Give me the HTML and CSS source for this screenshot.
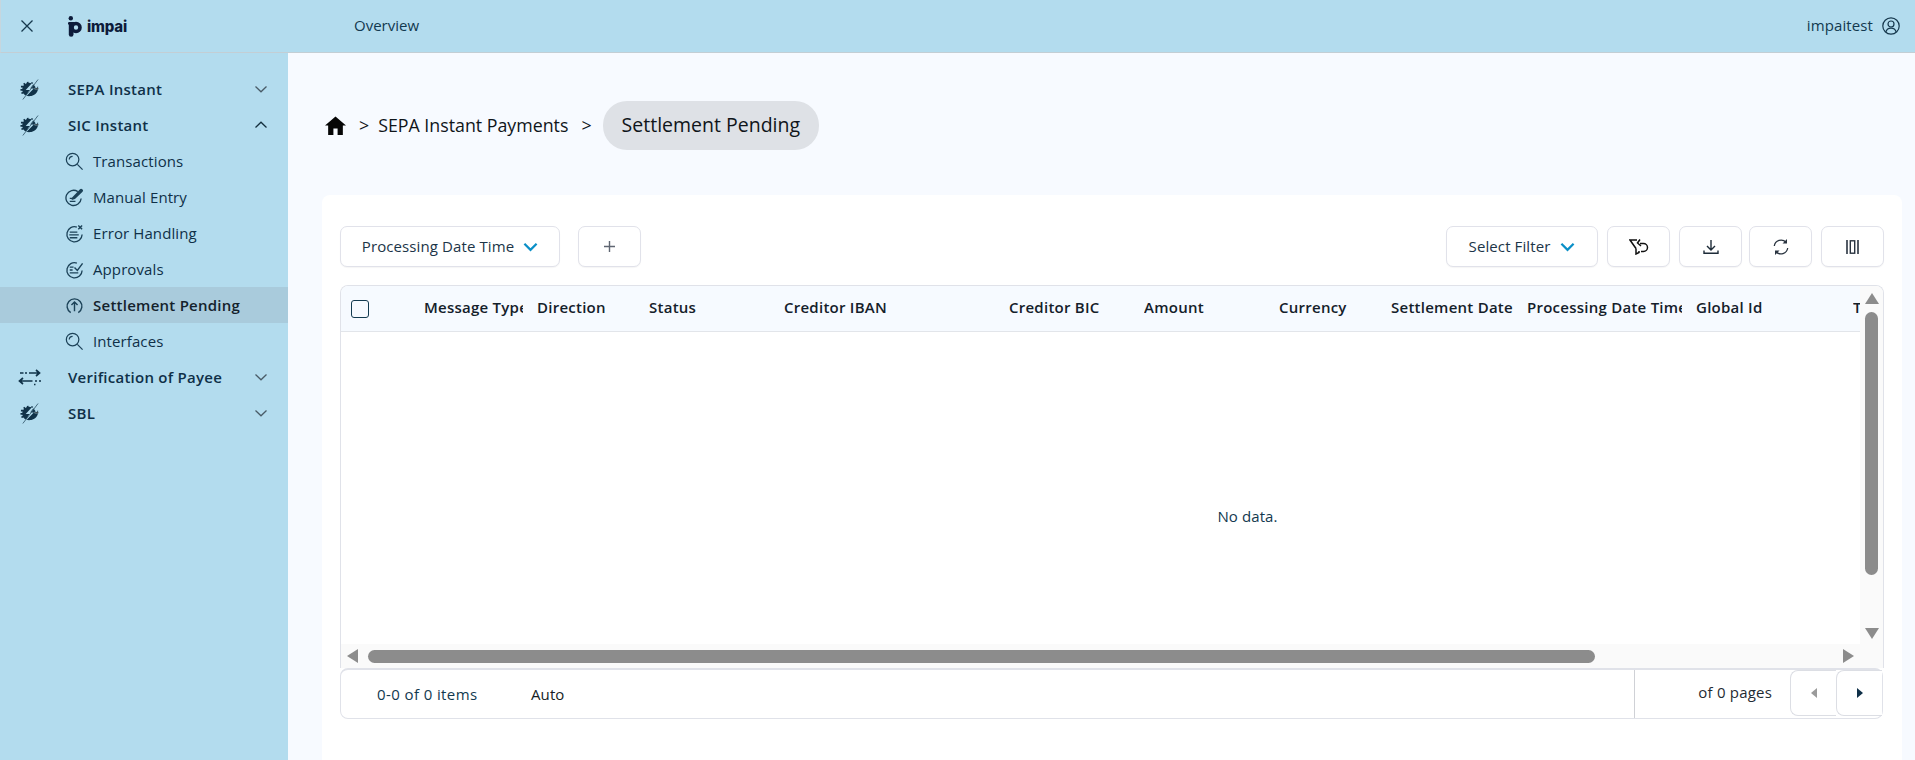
FILE: index.html
```html
<!DOCTYPE html>
<html lang="en">
<head>
  <meta charset="UTF-8">
  <meta name="viewport" content="width=device-width, initial-scale=1.0">
  <title>Settlement Pending</title>
  <link rel="stylesheet" href="styles.css">
</head>

<body>

  <!-- Shared sidebar icons -->
  <svg class="icon-defs" width="0" height="0">
    <symbol id="i-bolt" viewBox="0 0 20 22">
      <circle cx="9.500" cy="11" r="7.200" fill="currentColor"/>
      <path d="M1 8h3M.5 11.500h3M1.500 15l3-1M4 4.500l2 2.500M8 3l.5 3M13 3.500 12 6" stroke="currentColor" stroke-width="1.800"/>
      <path d="M19 7.500c.5 4.500-1.500 9-7 10-1.500.3-3 0-4-.5 2.500-.5 7-4.500 11-9.500Z" fill="currentColor"/>
      <path d="M12.500 4.500 6 11.500h4l-3 5-1 2 8.500-8.500h-3.800l3.300-4.500Z" fill="#b3dcee"/>
      <path d="M15.500 9.500h4v1.200h-4ZM3.500 21.500 18.500.5" stroke="#b3dcee" stroke-width=".5"/>
      <path d="M3 21.500 19 .5" stroke="currentColor" stroke-width=".7" fill="none"/>
    </symbol>
    <symbol id="i-search" viewBox="0 0 20 20">
      <circle cx="8" cy="8" r="6.600" fill="none" stroke="currentColor" stroke-width="1.300"/>
      <path d="m13 13 5.500 5.500M4.500 8A3.500 3.500 0 0 1 8 4.500" fill="none" stroke="currentColor" stroke-width="1.300"/>
    </symbol>
    <symbol id="i-transfer" viewBox="0 0 24 18">
      <path d="M2 5h3.500M7 5h2M11 5h10M18 2l3.500 3L18 8M23 13h-2M19 13h-2M14.500 13H2M5 10l-3.500 3L5 16" fill="none" stroke="currentColor" stroke-width="1.700"/>
      <path d="M16 16.500h1.500" stroke="currentColor" stroke-width="1.500"/>
    </symbol>
    <symbol id="i-chev" viewBox="0 0 14 8">
      <path d="M1.500 1.500 7 6.800l5.500-5.300" fill="none" stroke="currentColor" stroke-width="1.300"/>
    </symbol>
    <symbol id="i-caret" viewBox="0 0 16 10">
      <path d="M1.500 1.500 8 8l6.500-6.500" fill="none" stroke="currentColor" stroke-width="2.400"/>
    </symbol>
  </svg>

  <header class="topbar">
    <button class="close-btn">
      <svg width="14" height="14" viewBox="0 0 14 14"><path d="m1.500 1.500 11 11m0-11-11 11" stroke="#16384d" stroke-width="1.300" fill="none"/></svg>
    </button>
    <div class="logo">
      <svg width="14" height="21" viewBox="0 0 14 21">
        <circle cx="2.800" cy="2.200" r="2.200" fill="#0d1b3a"/>
        <rect x="0" y="6" width="7" height="2.800" rx="1.200" fill="#0d1b3a"/>
        <path d="M.8 8h4.700v10.500a2.350 2.350 0 0 1-4.700 0Z" fill="#0d1b3a"/>
        <circle cx="8" cy="11.500" r="4" fill="none" stroke="#0d1b3a" stroke-width="3.600"/>
      </svg>
      <span class="logo-text">impai</span>
    </div>
    <a class="top-link">Overview</a>
    <div class="user">
      <span>impaitest</span>
      <svg width="18" height="18" viewBox="0 0 18 18">
        <circle cx="9" cy="9" r="8.200" fill="none" stroke="#16384d" stroke-width="1.200"/>
        <circle cx="9" cy="7" r="3" fill="none" stroke="#16384d" stroke-width="1.200"/>
        <path d="M3.800 15c.8-2.600 2.800-3.800 5.200-3.800s4.400 1.200 5.200 3.800" fill="none" stroke="#16384d" stroke-width="1.200"/>
      </svg>
    </div>
  </header>

  <div class="layout">
    <aside class="sidebar">
      <div class="nav-item nav-group">
        <svg class="group-icon"><use href="#i-bolt"/></svg>
        <span>SEPA Instant</span>
        <svg class="chev"><use href="#i-chev"/></svg>
      </div>
      <div class="nav-item nav-group">
        <svg class="group-icon"><use href="#i-bolt"/></svg>
        <span>SIC Instant</span>
        <svg class="chev chev-up"><use href="#i-chev"/></svg>
      </div>
      <div class="nav-item nav-child">
        <svg class="child-icon"><use href="#i-search"/></svg>
        <span>Transactions</span>
      </div>
      <div class="nav-item nav-child">
        <svg class="child-icon" viewBox="0 0 20 20">
          <path d="M13.500 3.800A8 8 0 1 0 17 11" fill="none" stroke="currentColor" stroke-width="1.400"/>
          <path d="M5 14h6M5 11h3" stroke="currentColor" stroke-width="1.400"/>
          <path d="m7.500 10 8-8.500a1.800 1.800 0 0 1 3 2.500l-8 7.500-3.500 1Z" fill="currentColor"/>
        </svg>
        <span>Manual Entry</span>
      </div>
      <div class="nav-item nav-child">
        <svg class="child-icon" viewBox="0 0 20 20">
          <path d="M12.500 3.200A8 8 0 1 0 18 11" fill="none" stroke="currentColor" stroke-width="1.400"/>
          <path d="M5 8.500h8M4.500 11.500h10M5 14.500h8" stroke="currentColor" stroke-width="1.400"/>
          <path d="m14 1.500 4 4m0-4-4 4" stroke="currentColor" stroke-width="1.500"/>
        </svg>
        <span>Error Handling</span>
      </div>
      <div class="nav-item nav-child">
        <svg class="child-icon" viewBox="0 0 20 20">
          <path d="M12.500 3.200A8 8 0 1 0 18 11" fill="none" stroke="currentColor" stroke-width="1.400"/>
          <path d="M5 7.500h4M5 10.500h3M5 13.500h9" stroke="currentColor" stroke-width="1.400"/>
          <path d="m10 8 3 3 5.500-7.500" fill="none" stroke="currentColor" stroke-width="1.500"/>
        </svg>
        <span>Approvals</span>
      </div>
      <div class="nav-item nav-child nav-active">
        <svg class="child-icon" viewBox="0 0 20 20">
          <path d="M6 17.500A7.800 7.800 0 1 1 14 17.500" fill="none" stroke="currentColor" stroke-width="1.500"/>
          <path d="M10 16V6.500M6.800 9.500 10 6.300l3.200 3.200" fill="none" stroke="currentColor" stroke-width="1.500"/>
        </svg>
        <span>Settlement Pending</span>
      </div>
      <div class="nav-item nav-child">
        <svg class="child-icon"><use href="#i-search"/></svg>
        <span>Interfaces</span>
      </div>
      <div class="nav-item nav-group">
        <svg class="group-icon wide"><use href="#i-transfer"/></svg>
        <span>Verification of Payee</span>
        <svg class="chev"><use href="#i-chev"/></svg>
      </div>
      <div class="nav-item nav-group">
        <svg class="group-icon"><use href="#i-bolt"/></svg>
        <span>SBL</span>
        <svg class="chev"><use href="#i-chev"/></svg>
      </div>
    </aside>

    <main class="main">
      <div class="breadcrumb">
        <svg width="21" height="19" viewBox="0 0 20 19" preserveAspectRatio="none"><path d="M10 .5 0 9.500h3V19h5v-6.500h4V19h5V9.500h3Z" fill="#060606"/></svg>
        <span class="crumb-sep">&gt;</span>
        <span class="crumb">SEPA Instant Payments</span>
        <span class="crumb-sep">&gt;</span>
        <span class="crumb-current">Settlement Pending</span>
      </div>

      <section class="card">
        <div class="toolbar">
          <button class="btn btn-select"><span>Processing Date Time</span> <svg class="caret"><use href="#i-caret"/></svg></button>
          <button class="btn btn-icon btn-add">
            <svg width="13" height="13" viewBox="0 0 13 13"><path d="M6.500 1v11M1 6.500h11" stroke="#5f6672" stroke-width="1.400"/></svg>
          </button>
          <div class="toolbar-right">
            <button class="btn btn-filter"><span>Select Filter</span> <svg class="caret"><use href="#i-caret"/></svg></button>
            <button class="btn btn-icon">
              <svg width="20" height="17" viewBox="0 0 20 17">
                <path d="M7 10.500 1 2h7M7 10.500V16l3-1.500V13" fill="none" stroke="#111" stroke-width="1.500"/>
                <path d="M11 5.500h3.500a4 4 0 0 1 0 8H12M11 1.500 8.500 5l3.500 3" fill="none" stroke="#111" stroke-width="1.500"/>
              </svg>
            </button>
            <button class="btn btn-icon">
              <svg width="16" height="16" viewBox="0 0 16 16">
                <path d="M8 1v9.500M4 7l4 4 4-4M1 11.500v2.700h14v-2.700" fill="none" stroke="#1d2b38" stroke-width="1.400"/>
              </svg>
            </button>
            <button class="btn btn-icon btn-tight">
              <svg width="16" height="16" viewBox="0 0 16 16">
                <path d="M1.300 7A6.800 6.800 0 0 1 13 3.300M14.700 9A6.800 6.800 0 0 1 3 12.700" fill="none" stroke="#2a3440" stroke-width="1.300"/>
                <path d="M14 0v4.500H9.500ZM2 16v-4.500h4.500Z" fill="#2a3440"/>
              </svg>
            </button>
            <button class="btn btn-icon">
              <svg width="13" height="14" viewBox="0 0 13 14">
                <path d="M1 0v14M12 0v14" stroke="#2a3440" stroke-width="1.600"/>
                <rect x="4.300" y=".8" width="4.400" height="12.400" fill="none" stroke="#2a3440" stroke-width="1.400"/>
              </svg>
            </button>
          </div>
        </div>

        <div class="table">
          <div class="table-top">
            <div class="table-content">
              <div class="table-head">
                <div class="cell-check"><span class="checkbox"></span></div>
                <div class="th w-113"><span>Message Type</span></div>
                <div class="th w-112"><span>Direction</span></div>
                <div class="th w-135"><span>Status</span></div>
                <div class="th w-225"><span>Creditor IBAN</span></div>
                <div class="th w-135"><span>Creditor BIC</span></div>
                <div class="th w-135"><span>Amount</span></div>
                <div class="th w-112"><span>Currency</span></div>
                <div class="th w-136"><span>Settlement Date</span></div>
                <div class="th w-169"><span>Processing Date Time</span></div>
                <div class="th w-157"><span>Global Id</span></div>
                <div class="th w-last"><span>Type</span></div>
              </div>
              <div class="table-body">No data.</div>
            </div>
            <div class="vbar">
              <span class="arrow arrow-up"></span>
              <span class="vthumb"></span>
              <span class="arrow arrow-down"></span>
            </div>
          </div>
          <div class="hbar">
            <span class="arrow arrow-left"></span>
            <span class="hthumb"></span>
            <span class="arrow arrow-right"></span>
          </div>
        </div>

        <div class="pager">
          <span class="pager-items">0-0 of 0 items</span>
          <span class="pager-size">Auto</span>
          <div class="pager-right">
            <span class="pager-pages">of 0 pages</span>
            <button class="page-btn"><span class="tri tri-left"></span></button>
            <button class="page-btn page-next"><span class="tri tri-right"></span></button>
          </div>
        </div>
      </section>
    </main>
  </div>

</body>

</html>
```

FILE: styles.css
```css
/* General Styles */
* {
  box-sizing: border-box;
}

html,
body {
  margin: 0;
  padding: 0;
  height: 760px;
  overflow: hidden;
}

body {
  font-family: "Open Sans", "Liberation Sans", sans-serif;
  font-size: 15px;
  color: #0f3048;
  background-color: #f7faff;
}

button {
  font: inherit;
  color: inherit;
  background: none;
  border: none;
  padding: 0;
}

.icon-defs {
  position: absolute;
}

/* Top Bar */
.topbar {
  display: flex;
  align-items: center;
  height: 53px;
  background-color: #b3dcee;
  border-bottom: 1px solid #c3ced4;
  border-left: 1px solid #c6d6de;
}

.close-btn {
  display: flex;
  margin-left: 19px;
  width: 14px;
}

.logo {
  display: flex;
  align-items: center;
  gap: 5px;
  margin-left: 34px;
  width: 286px;
}

.logo-text {
  font-family: Inter, sans-serif;
  font-weight: 800;
  font-size: 15px;
  color: #0d1b3a;
  letter-spacing: -0.2px;
}

.top-link {
  margin-top: -2px;
  color: #12394f;
}

.user {
  display: flex;
  align-items: center;
  gap: 9px;
  margin-left: auto;
  margin-right: 15px;
  color: #12394f;
}

.user span {
  margin-top: -2px;
  letter-spacing: 0.1px;
}

/* Sidebar */
.layout {
  display: flex;
  height: 707px;
}

.sidebar {
  width: 288px;
  flex-shrink: 0;
  padding-top: 18px;
  background-color: #b3dcee;
}

.nav-item {
  display: flex;
  align-items: center;
  height: 36px;
  color: #0f3048;
  letter-spacing: 0.1px;
}

.nav-group {
  padding-left: 20px;
  font-weight: 600;
  letter-spacing: 0.25px;
}

.group-icon {
  width: 19px;
  height: 21px;
  margin-right: 29px;
  color: #113349;
}

.group-icon.wide {
  width: 24px;
  height: 18px;
  margin-left: -2px;
  margin-right: 26px;
}

.chev {
  width: 14px;
  height: 8px;
  margin-left: auto;
  margin-right: 20px;
  color: #4a5c68;
}

.chev-up {
  transform: rotate(180deg);
  color: #15303f;
}

.nav-child {
  padding-left: 65px;
}

.child-icon {
  width: 19px;
  height: 19px;
  margin-right: 9px;
  color: #1c4258;
}

.nav-active {
  background-color: #a9cbdc;
  font-weight: 600;
  color: #14222c;
  letter-spacing: 0.25px;
}

/* Main Area */
.main {
  flex: 1;
  min-width: 0;
  padding: 47px 13px 0 34px;
}

.breadcrumb {
  display: flex;
  align-items: center;
  height: 50px;
  margin-left: 3px;
  font-size: 17.8px;
  color: #10151a;
}

.crumb-sep {
  margin: 0 9px 0 13px;
}

.crumb-current {
  display: flex;
  align-items: center;
  height: 49px;
  margin-left: 2px;
  padding: 0 19px 2px;
  border-radius: 24px;
  background-color: #dee1e6;
  font-size: 19.500px;
}

.card {
  height: 565px;
  margin-top: 45px;
  padding: 31px 18px 0;
  background-color: #fff;
  border-radius: 8px 8px 0 0;
}

/* Toolbar */
.toolbar {
  display: flex;
  height: 41px;
  margin-bottom: 18px;
}

.toolbar-right {
  display: flex;
  gap: 9px;
  margin-left: auto;
}

.btn {
  display: flex;
  align-items: center;
  justify-content: center;
  height: 41px;
  background-color: #fff;
  border: 1px solid #e1e2ea;
  border-radius: 7px;
  box-shadow: 0 1px 1px rgba(0, 0, 0, 0.04);
  color: #1c3548;
  letter-spacing: 0.1px;
}

.btn span {
  margin-top: -2px;
}

.btn-select {
  width: 220px;
  gap: 9px;
}

.btn-filter {
  width: 152px;
  gap: 10px;
}

.btn-add {
  margin-left: 18px;
}

.btn-icon {
  width: 63px;
}

.btn-tight {
  margin-left: -2px;
}

.caret {
  width: 15px;
  height: 10px;
  color: #0a8fc7;
}

/* Table */
.table {
  height: 383px;
  border: 1px solid #e0e2e9;
  border-bottom: none;
  border-radius: 8px 8px 0 0;
  overflow: hidden;
}

.table-top {
  display: flex;
  height: 358px;
}

.table-content {
  flex: 1;
  min-width: 0;
  overflow: hidden;
}

.table-head {
  display: flex;
  align-items: center;
  height: 46px;
  background-color: #f6faff;
  border-bottom: 1px solid #e2e5ea;
  font-weight: 600;
  color: #14202a;
  white-space: nowrap;
  letter-spacing: 0.25px;
}

.cell-check {
  width: 83px;
  flex-shrink: 0;
  padding-left: 10px;
  display: flex;
}

.checkbox {
  width: 18px;
  height: 18px;
  border: 1px solid #123a50;
  border-radius: 3px;
}

.th {
  flex-shrink: 0;
  padding-right: 14px;
  margin-top: -3px;
}

.th span {
  display: block;
  overflow: hidden;
}

.w-112 { width: 112px; }
.w-113 { width: 113px; }
.w-135 { width: 135px; }
.w-136 { width: 136px; }
.w-157 { width: 157px; }
.w-169 { width: 169px; }
.w-225 { width: 225px; }
.w-last { width: 100px; }

.table-body {
  display: flex;
  align-items: center;
  justify-content: center;
  height: 311px;
  padding: 57px 0 0 294px;
  color: #12394f;
  letter-spacing: 0.1px;
}

/* Fake scrollbars, native ones do not keep this shape */
.vbar {
  display: flex;
  flex-direction: column;
  align-items: center;
  width: 23px;
  flex-shrink: 0;
  padding-top: 7px;
  background-color: #fafafa;
}

.vthumb {
  width: 13px;
  height: 263px;
  margin: 8px 0 53px;
  background-color: #8c8c8c;
  border-radius: 7px;
}

.hbar {
  display: flex;
  align-items: center;
  height: 24px;
  padding: 0 29px 0 6px;
  background-color: #fafafa;
}

.hthumb {
  width: 1227px;
  height: 13px;
  margin-left: 10px;
  background-color: #8c8c8c;
  border-radius: 7px;
}

.arrow {
  width: 0;
  height: 0;
  flex-shrink: 0;
  border-style: solid;
  border-color: transparent;
}

.arrow-up {
  border-width: 0 7.5px 11px;
  border-bottom-color: #8c8c8c;
}

.arrow-down {
  border-width: 11px 7.5px 0;
  border-top-color: #8c8c8c;
}

.arrow-left {
  border-width: 7px 11px 7px 0;
  border-right-color: #8c8c8c;
}

.arrow-right {
  margin-left: auto;
  border-width: 7px 0 7px 11px;
  border-left-color: #8c8c8c;
}

/* Pager */
.pager {
  display: flex;
  align-items: center;
  width: 1543px;
  height: 51px;
  background-color: #fff;
  border: 1px solid #e0e2e9;
  border-top-width: 2px;
  border-radius: 8px;
}

.pager-items {
  margin-left: 36px;
  width: 154px;
  color: #12394f;
  letter-spacing: 0.4px;
}

.pager-size {
  color: #161d24;
  letter-spacing: 0.1px;
}

.pager-right {
  display: flex;
  align-items: center;
  height: 100%;
  margin-left: auto;
  width: 248px;
  border-left: 1px solid #cfd1d6;
  color: #1f2b33;
}

.pager-pages {
  margin-left: auto;
  margin-right: 18px;
  margin-top: -5px;
  letter-spacing: 0.2px;
}

.page-btn {
  display: flex;
  align-items: center;
  justify-content: center;
  width: 46px;
  height: 46px;
  align-self: flex-start;
  background-color: #fff;
  border: 1px solid #dcdee4;
  border-right: none;
  border-radius: 8px 0 0 8px;
}

.tri {
  width: 0;
  height: 0;
  border-style: solid;
  border-color: transparent;
}

.tri-left {
  border-width: 5px 6px 5px 0;
  border-right-color: #9b9b9b;
}

.tri-right {
  border-width: 5px 0 5px 6px;
  border-left-color: #0f3048;
}
```
